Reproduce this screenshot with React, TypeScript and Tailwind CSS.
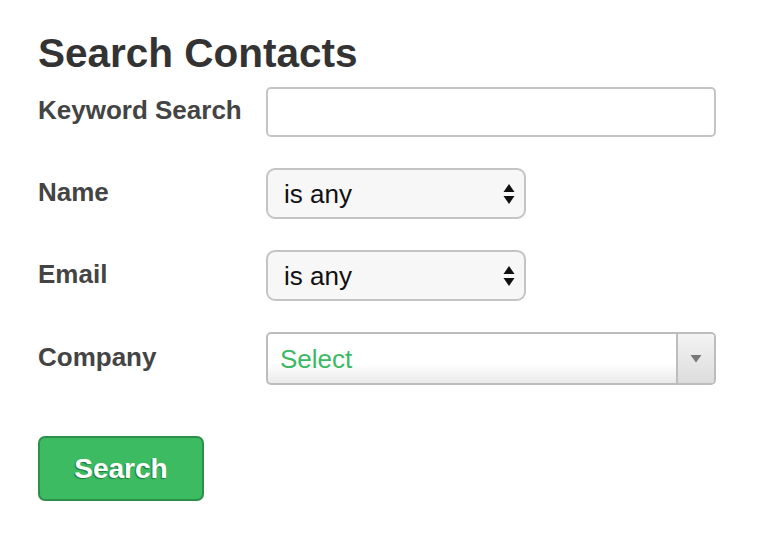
import React from 'react';

const font = { fontFamily: '"Liberation Sans", Arial, sans-serif' };

const Label = ({ children }: { children: React.ReactNode }) => (
  <div className="w-[228px] shrink-0 text-[26px] font-bold text-[#444] leading-none -mt-[4px]">{children}</div>
);

const UpDown = () => (
  <svg width="12" height="22" viewBox="0 0 12 22" className="shrink-0">
    <path d="M6 1 L11.5 9 H0.5 Z" fill="#111" />
    <path d="M6 21 L11.5 13 H0.5 Z" fill="#111" />
  </svg>
);

const NativeSelect = () => (
  <div className="w-[260px] h-[51px] rounded-[9px] border-2 border-[#c4c4c4] bg-[#f7f7f7] flex items-center justify-between pl-[16px] pr-[9px]">
    <span className="text-[26px] text-[#111] leading-none mt-[1px]">is any</span>
    <UpDown />
  </div>
);

const App = () => {
  return (
    <div className="w-[762px] h-[540px] bg-white pl-[38px] pt-[31px]" style={font}>
      <h1 className="text-[40.5px] font-bold text-[#333] leading-[44px] mb-[12px]">Search Contacts</h1>

      <div className="flex items-center h-[50px] mb-[31px]">
        <Label>Keyword Search</Label>
        <div className="w-[450px] h-[50px] rounded-[5px] border-2 border-[#c4c4c4] bg-white" />
      </div>

      <div className="flex items-center h-[51px] mb-[31px]">
        <Label>Name</Label>
        <NativeSelect />
      </div>

      <div className="flex items-center h-[51px] mb-[31px]">
        <Label>Email</Label>
        <NativeSelect />
      </div>

      <div className="flex items-center h-[53px] mb-[51px]">
        <Label>Company</Label>
        <div className="w-[450px] h-[53px] rounded-[5px] border-2 border-[#bdbdbd] bg-gradient-to-b from-white from-60% to-[#eaeaea] flex overflow-hidden">
          <div className="flex-1 flex items-center pl-[12px] text-[26px] text-[#3cb963] leading-none">Select</div>
          <div className="w-[38px] border-l-2 border-[#bdbdbd] bg-gradient-to-b from-[#f4f4f4] to-[#dcdcdc] flex items-center justify-center">
            <svg width="12" height="9" viewBox="0 0 12 9">
              <path d="M0.5 1 H11.5 L6 8.5 Z" fill="#777" />
            </svg>
          </div>
        </div>
      </div>

      <button
        className="w-[166px] h-[65px] rounded-[7px] border-2 border-[#2c8f4a] bg-[#3dbb63] text-white text-[28px] font-bold leading-none"
        style={{ ...font, textShadow: '-1px 1px 1px #1f7a3a' }}
      >
        Search
      </button>
    </div>
  );
};

export default App;
